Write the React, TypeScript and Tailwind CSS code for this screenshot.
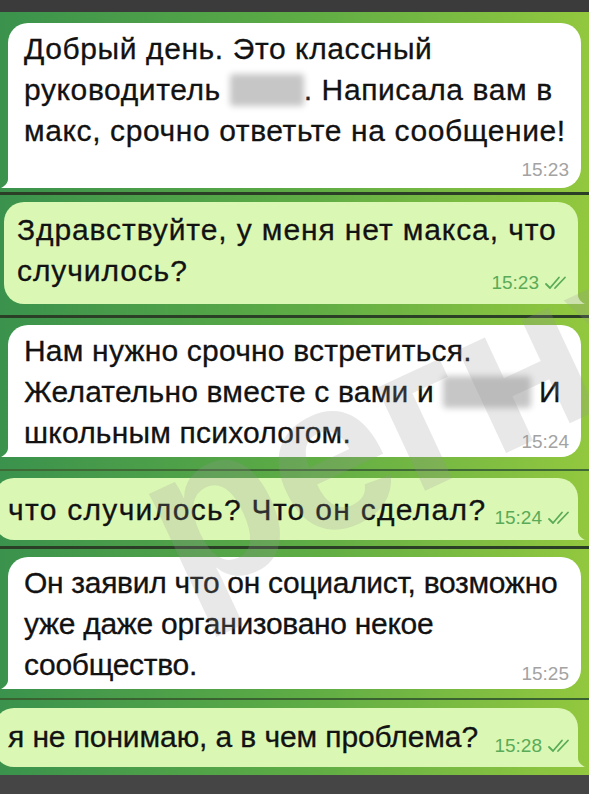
import type { ReactNode } from "react";

function Check() {
  return (
    <svg width="26" height="14" viewBox="0 0 26 14" fill="none" stroke="currentColor" strokeWidth="1.8" strokeLinecap="round" strokeLinejoin="round">
      <path d="M2 8l4 4 9-10.5" />
      <path d="M11 12l10-10.5" />
    </svg>
  );
}

function Tail({ side, color }: { side: "left" | "right"; color: string }) {
  if (side === "left") {
    return (
      <svg className="absolute bottom-0 -left-[7px]" width="16" height="22" viewBox="0 0 16 22">
        <path d="M7 0 V13 C7 17 4 20 0 22 H16 V0 Z" fill={color} />
      </svg>
    );
  }
  return (
    <svg className="absolute bottom-0 -right-[7px]" width="16" height="22" viewBox="0 0 16 22">
      <path d="M9 0 V13 C9 17 12 20 16 22 H0 V0 Z" fill={color} />
    </svg>
  );
}

function Bubble({ out, className, children }: { out?: boolean; className: string; children: ReactNode }) {
  return (
    <div
      className={`relative rounded-[20px] ${out ? "bg-[#dbf7b4] rounded-br-[6px]" : "bg-white rounded-bl-[6px]"} ${className}`}
    >
      {children}
      <Tail side={out ? "right" : "left"} color={out ? "#dbf7b4" : "#ffffff"} />
    </div>
  );
}

function Time({ t, out, className = "" }: { t: string; out?: boolean; className?: string }) {
  return (
    <span
      className={`flex items-center gap-[5px] whitespace-nowrap text-[19px] leading-[22px] tracking-normal [-webkit-text-stroke:0] ${out ? "text-[#5aab58]" : "text-[#a3a3a3]"} ${className}`}
    >
      {t}
      {out && <Check />}
    </span>
  );
}

function Hidden({ w }: { w: number }) {
  return (
    <span className="inline-block align-middle -mt-[4px] h-[32px] bg-[#c6c6c6] blur-[3px] rounded-[3px]" style={{ width: w }} />
  );
}

function Sep({ className = "h-[3px] bg-[#2b3f27]" }: { className?: string }) {
  return <div className={className} />;
}

export default function App() {
  return (
    <div className="relative h-[794px] w-[589px] overflow-hidden flex flex-col bg-gradient-to-r from-[#3a924c] via-[#5cab45] to-[#92c83e] font-['Liberation_Sans',Arial,sans-serif] text-[30px] leading-[41px] text-[#121212] [-webkit-text-stroke:0.3px_#121212]">
      <div className="h-[12px] bg-[#3b3b3b]" />

      {/* 1 */}
      <div className="pt-[11px] pb-[4px] pl-[8px] pr-[8px]">
        <Bubble className="pl-[16px] pr-[12px] pt-[5px] pb-[7px] tracking-[0.6px]">
          <div className="whitespace-nowrap">Добрый день. Это классный</div>
          <div className="whitespace-nowrap">
            руководитель <Hidden w={74} />. Написала вам в
          </div>
          <div className="whitespace-nowrap">макс, срочно ответьте на сообщение!</div>
          <div className="flex justify-end pt-[8px]">
            <Time t="15:23" />
          </div>
        </Bubble>
      </div>
      <Sep />

      {/* 2 */}
      <div className="pt-[7px] pb-[11px] pl-[4px] pr-[11px]">
        <Bubble out className="pl-[13px] pr-[8px] pt-[7px] pb-[13px] tracking-[0.9px]">
          <div className="whitespace-nowrap">Здравствуйте, у меня нет макса, что</div>
          <div className="flex items-end justify-between">
            <span className="whitespace-nowrap">случилось?</span>
            <Time out t="15:23" className="-mb-[3px]" />
          </div>
        </Bubble>
      </div>
      <Sep />

      {/* 3 */}
      <div className="pt-[7px] pb-[12px] pl-[8px] pr-[8px]">
        <Bubble className="pl-[16px] pr-[12px] pt-[5px] pb-[4px] tracking-[0.2px]">
          <div className="whitespace-nowrap">Нам нужно срочно встретиться.</div>
          <div className="whitespace-nowrap">
            Желательно вместе с вами и <Hidden w={88} /> И
          </div>
          <div className="flex items-end justify-between">
            <span className="whitespace-nowrap">школьным психологом.</span>
            <Time t="15:24" />
          </div>
        </Bubble>
      </div>
      <Sep className="h-[2px] bg-[#3f6a35]" />

      {/* 4 */}
      <div className="pt-[7px] pb-[6px] pl-0 pr-[11px]">
        <Bubble out className="-ml-[6px] pl-[14px] pr-[5px] pt-[11px] pb-[10px] tracking-[1.3px]">
          <div className="flex items-end justify-between">
            <span className="whitespace-nowrap">что случилось? Что он сделал?</span>
            <Time out t="15:24" className="mb-[1px]" />
          </div>
        </Bubble>
      </div>
      <Sep />

      {/* 5 */}
      <div className="pt-[8px] pb-[9px] pl-[8px] pr-[8px]">
        <Bubble className="pl-[16px] pr-[12px] pt-[5px] pb-[4px] tracking-[-0.3px]">
          <div className="whitespace-nowrap">Он заявил что он социалист, возможно</div>
          <div className="whitespace-nowrap">уже даже организовано некое</div>
          <div className="flex items-end justify-between">
            <span className="whitespace-nowrap">сообщество.</span>
            <Time t="15:25" />
          </div>
        </Bubble>
      </div>
      <Sep className="h-[2px] bg-[#3a6231]" />

      {/* 6 */}
      <div className="pt-[8px] pb-[8px] pl-0 pr-[11px]">
        <Bubble out className="-ml-[6px] pl-[14px] pr-[5px] pt-[8px] pb-[10px] tracking-[-0.1px]">
          <div className="flex items-end justify-between">
            <span className="whitespace-nowrap">я не понимаю, а в чем проблема?</span>
            <Time out t="15:28" />
          </div>
        </Bubble>
      </div>

      <div className="flex-1 bg-[#454545]" />

      {/* watermark */}
      <div className="pointer-events-none absolute left-[198px] top-[418px] origin-bottom-left -rotate-[25deg] whitespace-nowrap text-[215px] font-bold leading-none text-[rgba(150,150,150,0.22)] [-webkit-text-stroke:0]">
        регнум
      </div>
    </div>
  );
}
